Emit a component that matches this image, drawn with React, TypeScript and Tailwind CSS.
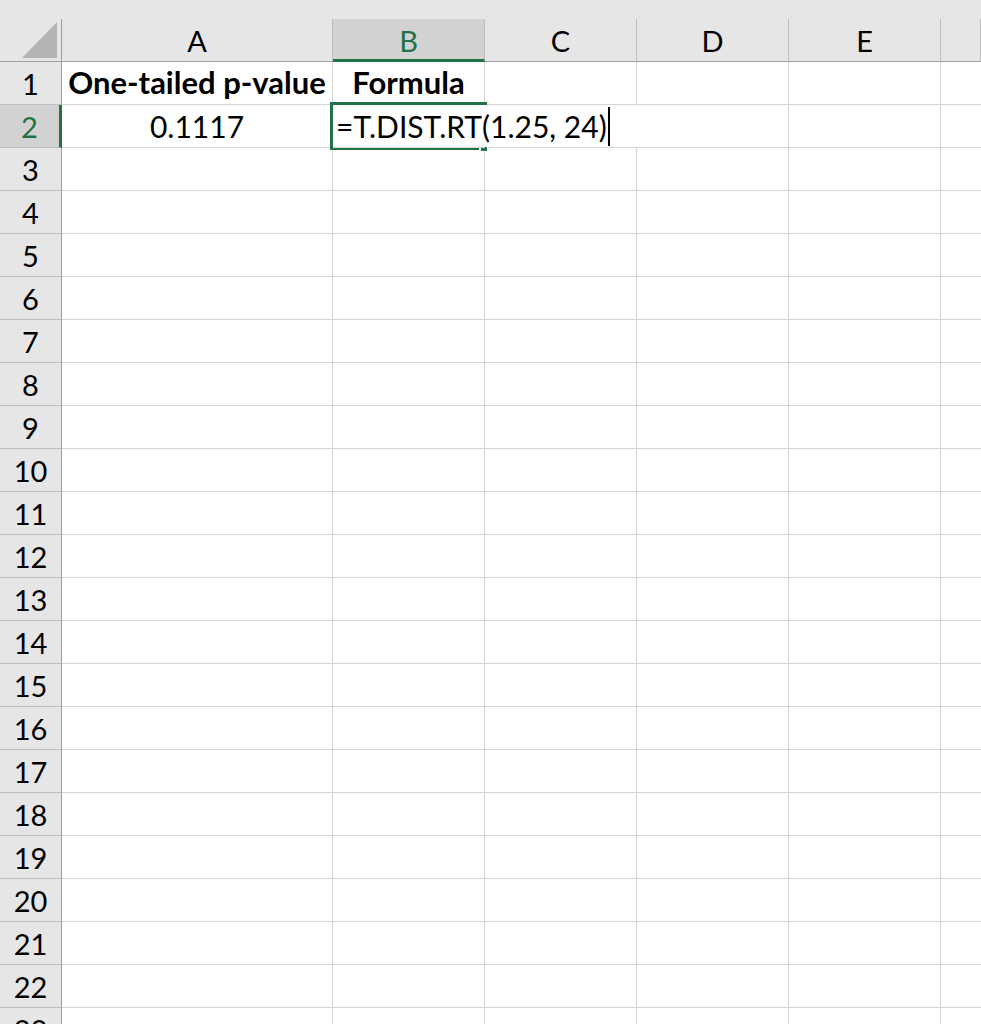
import React from 'react';

const GREEN = '#217346';
const cols = ['A', 'B', 'C', 'D', 'E', ''];
const rowNums = Array.from({ length: 23 }, (_, i) => i + 1);

const Corner: React.FC = () => (
  <div className="relative border-r border-b border-[#9e9e9e] bg-[#e6e6e6]">
    <svg width="36" height="36" viewBox="0 0 36 36" className="absolute left-[22px] top-[3px]">
      <polygon points="35,0 35,36 0,36" fill="#b4b4b4" />
    </svg>
  </div>
);

const App: React.FC = () => {
  return (
    <div
      className="relative w-[981px] h-[1024px] overflow-hidden bg-white text-black"
      style={{ fontFamily: 'Lato, "Open Sans", sans-serif' }}
    >
      {/* strip above the column letters */}
      <div className="h-[19px] bg-[#e6e6e6]" />

      <div className="grid grid-cols-[62px_271px_152px_152px_152px_152px_1fr] auto-rows-[43px]">
        {/* column header row */}
        <Corner />
        {cols.map((c, i) =>
          c === 'B' ? (
            <div
              key={i}
              className="flex items-center justify-center bg-[#d2d2d2] border-r border-r-[#bdbdbd] border-b-[3px] border-b-[#217346] text-[29px] text-[#217346] pt-[3px]"
            >
              {c}
            </div>
          ) : (
            <div
              key={i}
              className="flex items-center justify-center bg-[#e6e6e6] border-r border-r-[#bdbdbd] border-b border-b-[#9e9e9e] text-[29px] pt-[2px]"
            >
              {c}
            </div>
          )
        )}

        {/* body rows */}
        {rowNums.map((n) => (
          <React.Fragment key={n}>
            {n === 2 ? (
              <div className="flex items-end justify-center bg-[#d2d2d2] border-b border-b-[#bdbdbd] border-r-[3px] border-r-[#217346] text-[29px] leading-none pb-[6px] text-[#217346]">
                {n}
              </div>
            ) : (
              <div className="flex items-end justify-center bg-[#e6e6e6] border-b border-b-[#bdbdbd] border-r border-r-[#9e9e9e] text-[29px] leading-none pb-[6px]">
                {n}
              </div>
            )}

            {n === 1 ? (
              <>
                <div className="flex items-end justify-center border-r border-b border-[#d4d4d4] text-[31px] font-bold leading-none pb-[6px] whitespace-nowrap">
                  One-tailed p-value
                </div>
                <div className="flex items-end justify-center border-r border-b border-[#d4d4d4] text-[31px] font-bold leading-none pb-[6px]">
                  Formula
                </div>
              </>
            ) : n === 2 ? (
              <>
                <div className="flex items-end justify-center border-r border-b border-[#d4d4d4] text-[30px] leading-none pb-[6px]">
                  0.1117
                </div>
                <div className="relative z-10 flex items-end border-b border-[#d4d4d4] text-[30px] leading-none pb-[6px] pl-[3px] whitespace-nowrap overflow-visible">
                  <span className="shrink-0">=T.DIST.RT(1.25, 24)</span>
                  <span className="shrink-0 inline-block w-[2px] h-[39px] bg-black ml-[1px] mb-[-5px]" />
                </div>
              </>
            ) : (
              <>
                <div className="border-r border-b border-[#d4d4d4]" />
                <div className="border-r border-b border-[#d4d4d4]" />
              </>
            )}

            <div className={`border-b border-[#d4d4d4] ${n === 2 ? '' : 'border-r'}`} />
            <div className="border-r border-b border-[#d4d4d4]" />
            <div className="border-r border-b border-[#d4d4d4]" />
            <div className="border-b border-[#d4d4d4]" />
          </React.Fragment>
        ))}
      </div>

      {/* active cell outline for B2 */}
      <div className="absolute left-[330px] top-[102px] w-[157px] h-[3px] bg-[#217346]" />
      <div className="absolute left-[330px] top-[102px] w-[3px] h-[48px] bg-[#217346]" />
      <div className="absolute left-[330px] top-[147px] w-[149px] h-[3px] bg-[#217346]" />
      <div
        className="absolute left-[480px] top-[146px] w-[8px] h-[6px] border border-white"
        style={{ backgroundColor: GREEN }}
      />
    </div>
  );
};

export default App;
